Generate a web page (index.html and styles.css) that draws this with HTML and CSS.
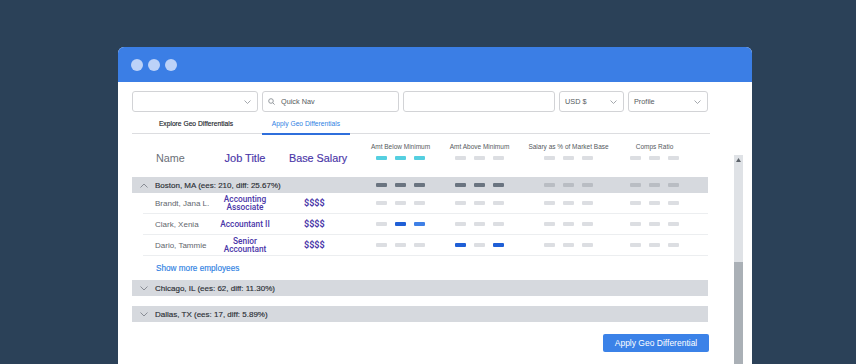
FILE: index.html
```html
<!DOCTYPE html>
<html>
<head>
<meta charset="utf-8">
<link rel="stylesheet" href="styles.css">
</head>
<body>
<div class="window">
  <div class="titlebar">
    <span class="dot"></span><span class="dot"></span><span class="dot"></span>
  </div>
  <div class="content">
    <div class="toolbar">
      <div class="field f1"><span class="grow"></span><svg class="chev" width="7" height="4" viewBox="0 0 7 4"><polyline points="0.5,0.5 3.5,3.5 6.5,0.5" /></svg></div>
      <div class="field f2"><svg class="search" width="7" height="7" viewBox="0 0 7 7"><circle cx="3" cy="3" r="2.3"/><line x1="4.7" y1="4.7" x2="6.6" y2="6.6"/></svg><span class="grow">Quick Nav</span></div>
      <div class="field f3"></div>
      <div class="field f4"><span class="grow">USD $</span><svg class="chev" width="7" height="4" viewBox="0 0 7 4"><polyline points="0.5,0.5 3.5,3.5 6.5,0.5" /></svg></div>
      <div class="field f5"><span class="grow">Profile</span><svg class="chev" width="7" height="4" viewBox="0 0 7 4"><polyline points="0.5,0.5 3.5,3.5 6.5,0.5" /></svg></div>
    </div>
    <div class="tabs">
      <div class="tab t1">Explore Geo Differentials</div>
      <div class="tab t2 active">Apply Geo Differentials</div>
    </div>
    <div class="main">
      <div class="table">
        <div class="row labels">
          <span></span><span></span><span></span><span></span>
          <div class="lab">Amt Below Minimum</div>
          <div class="lab">Amt Above Minimum</div>
          <div class="lab">Salary as % of Market Base</div>
          <div class="lab">Comps Ratio</div>
        </div>
        <div class="row head">
          <span></span>
          <div class="h-name">Name</div>
          <div class="h-job">Job Title</div>
          <div class="h-sal">Base Salary</div>
          <div class="bars"><i class="b cy"></i><i class="b cy"></i><i class="b cy"></i></div>
          <div class="bars"><i class="b"></i><i class="b"></i><i class="b"></i></div>
          <div class="bars"><i class="b"></i><i class="b"></i><i class="b"></i></div>
          <div class="bars"><i class="b"></i><i class="b"></i><i class="b"></i></div>
        </div>

        <div class="row group">
          <svg class="gchev" width="8" height="5" viewBox="0 0 8 5"><polyline points="0.5,4.5 4,1 7.5,4.5" /></svg>
          <div class="gname">Boston, MA (ees: 210, diff: 25.67%)</div>
          <div class="bars"><i class="b dk"></i><i class="b dk"></i><i class="b dk"></i></div>
          <div class="bars"><i class="b dk"></i><i class="b dk"></i><i class="b dk"></i></div>
          <div class="bars"><i class="b md"></i><i class="b md"></i><i class="b md"></i></div>
          <div class="bars"><i class="b md"></i><i class="b md"></i><i class="b md"></i></div>
        </div>

        <div class="row emp">
          <span></span>
          <div class="ename">Brandt, Jana L.</div>
          <div class="ejob">Accounting<br>Associate</div>
          <div class="esal">$$$$</div>
          <div class="bars"><i class="b"></i><i class="b"></i><i class="b"></i></div>
          <div class="bars"><i class="b"></i><i class="b"></i><i class="b"></i></div>
          <div class="bars"><i class="b"></i><i class="b"></i><i class="b"></i></div>
          <div class="bars"><i class="b"></i><i class="b"></i><i class="b"></i></div>
        </div>
        <div class="row emp">
          <span></span>
          <div class="ename">Clark, Xenia</div>
          <div class="ejob">Accountant II</div>
          <div class="esal">$$$$</div>
          <div class="bars"><i class="b"></i><i class="b bl1"></i><i class="b bl2"></i></div>
          <div class="bars"><i class="b"></i><i class="b"></i><i class="b"></i></div>
          <div class="bars"><i class="b"></i><i class="b"></i><i class="b"></i></div>
          <div class="bars"><i class="b"></i><i class="b"></i><i class="b"></i></div>
        </div>
        <div class="row emp">
          <span></span>
          <div class="ename">Dario, Tammie</div>
          <div class="ejob">Senior<br>Accountant</div>
          <div class="esal">$$$$</div>
          <div class="bars"><i class="b"></i><i class="b"></i><i class="b"></i></div>
          <div class="bars"><i class="b bl1"></i><i class="b"></i><i class="b bl1"></i></div>
          <div class="bars"><i class="b"></i><i class="b"></i><i class="b"></i></div>
          <div class="bars"><i class="b"></i><i class="b"></i><i class="b"></i></div>
        </div>

        <div class="more">Show more employees</div>

        <div class="row group">
          <svg class="gchev" width="8" height="5" viewBox="0 0 8 5"><polyline points="0.5,0.5 4,4 7.5,0.5" /></svg>
          <div class="gname">Chicago, IL (ees: 62, diff: 11.30%)</div>
        </div>
        <div class="row group">
          <svg class="gchev" width="8" height="5" viewBox="0 0 8 5"><polyline points="0.5,0.5 4,4 7.5,0.5" /></svg>
          <div class="gname">Dallas, TX (ees: 17, diff: 5.89%)</div>
        </div>

        <div class="actions">
          <button class="apply">Apply Geo Differential</button>
        </div>
      </div>
      <div class="scrollbar">
        <svg class="arrow" width="5" height="4" viewBox="0 0 5 4"><polygon points="0,4 2.5,0 5,4"/></svg>
        <div class="thumb"></div>
      </div>
    </div>
  </div>
</div>
</body>
</html>
```

FILE: styles.css
```css
html, body {
  margin: 0;
  padding: 0;
}
body {
  width: 856px;
  height: 364px;
  overflow: hidden;
  background: #2b4158;
  font-family: "Liberation Sans", Arial, sans-serif;
  padding: 47px 0 0 118px;
  box-sizing: border-box;
}
.window {
  width: 634px;
  height: 317px;
  background: #fff;
  border-radius: 6px 6px 0 0;
  overflow: hidden;
}
.titlebar {
  height: 35px;
  background: #3b7ee5;
  display: flex;
  align-items: center;
  gap: 5px;
  padding-left: 13px;
}
.dot {
  width: 12px;
  height: 12px;
  border-radius: 50%;
  background: #bcd2f8;
}
.content {
  padding: 9px 0 0 14px;
}
.toolbar {
  display: flex;
  gap: 4px;
  height: 21px;
  width: 576px;
}
.field {
  box-sizing: border-box;
  height: 21px;
  border: 1px solid #d2d3d6;
  border-radius: 3px;
  display: flex;
  align-items: center;
  padding: 0 6px 0 5px;
  font-size: 7.3px;
  color: #555a60;
}
.grow { flex: 1; }
.f1 { width: 126px; }
.f2 { width: 137px; }
.f3 { width: 152px; }
.f4 { width: 65px; }
.f5 { width: 80px; }
.chev polyline {
  fill: none;
  stroke: #9a9ea4;
  stroke-width: 0.9;
}
.search { margin-right: 6px; }
.search circle, .search line {
  fill: none;
  stroke: #8a8e94;
  stroke-width: 0.9;
}
.tabs {
  display: flex;
  gap: 2px;
  width: 578px;
  height: 22px;
  border-bottom: 1px solid #dcdde0;
  box-sizing: border-box;
}
.tab {
  font-size: 6.7px;
  color: #22262c;
  -webkit-text-stroke: 0.15px #22262c;
  display: flex;
  align-items: center;
  justify-content: center;
  box-sizing: border-box;
  height: 22px;
}
.t1 { width: 128px; }
.t2 { width: 88px; }
.tab.active {
  color: #2f7fe3;
  -webkit-text-stroke: 0;
  border-bottom: 2px solid #2f6fdc;
  margin-bottom: -1px;
  height: 23px;
  padding-top: 1px;
}
.main {
  display: flex;
}
.table {
  width: 576px;
}
.row {
  display: grid;
  grid-template-columns: 23px 58px 64px 99px 79px 89px 86px 78px;
  align-items: center;
}
.labels {
  height: 12px;
  margin-top: 6px;
}
.lab {
  width: 49px;
  display: flex;
  justify-content: center;
  white-space: nowrap;
  font-size: 6.5px;
  color: #555a60;
}
.head {
  height: 12px;
  margin-bottom: 13px;
}
.h-name {
  font-size: 10.8px;
  color: #6b7078;
  padding-left: 1px;
}
.h-job {
  font-size: 11px;
  color: #4a36a8;
  -webkit-text-stroke: 0.15px #4a36a8;
  text-align: center;
  white-space: nowrap;
}
.h-sal {
  font-size: 10.8px;
  color: #4a36a8;
  -webkit-text-stroke: 0.15px #4a36a8;
  padding-left: 12px;
  white-space: nowrap;
}
.bars {
  display: flex;
  gap: 8px;
}
.b {
  display: block;
  width: 11px;
  height: 4px;
  border-radius: 1px;
  background: #dcdee2;
}
.b.cy { background: #55cfe0; }
.b.dk { background: #6a7480; }
.b.md { background: #b9bdc3; }
.b.bl1 { background: #1f5fd6; }
.b.bl2 { background: #3f80e6; }
.group {
  height: 16px;
  background: #d6d9de;
  grid-template-columns: 23px 221px 79px 89px 86px 78px;
}
.gchev {
  justify-self: center;
}
.gchev polyline {
  fill: none;
  stroke: #80858c;
  stroke-width: 0.9;
}
.gname {
  font-size: 8px;
  color: #2a2e34;
  -webkit-text-stroke: 0.15px #2a2e34;
  white-space: nowrap;
}
.emp {
  height: 20px;
  margin-left: 11px;
  grid-template-columns: 12px 58px 64px 99px 79px 89px 86px 78px;
  border-bottom: 1px solid #eceef0;
}
.ename {
  font-size: 8px;
  color: #62666d;
  white-space: nowrap;
}
.ejob {
  font-family: Roboto, "Liberation Sans", sans-serif;
  font-weight: 500;
  font-size: 8.3px;
  color: #4a36a8;
  text-align: center;
  line-height: 8.5px;
  white-space: nowrap;
}
.esal {
  font-family: Roboto, "Liberation Sans", sans-serif;
  font-size: 9px;
  font-weight: 700;
  color: #4a36a8;
  padding-left: 27px;
}
.more {
  height: 24px;
  display: flex;
  align-items: center;
  padding-left: 24px;
  font-size: 8.2px;
  color: #2f7fe3;
  -webkit-text-stroke: 0.15px #2f7fe3;
}
.group + .group {
  margin-top: 10px;
}
.actions {
  display: flex;
  justify-content: flex-end;
  margin-top: 12px;
  margin-right: -1px;
}
.apply {
  height: 18px;
  width: 106px;
  border: none;
  border-radius: 2px;
  background: #3b82e8;
  color: #fff;
  font-family: "Liberation Sans", Arial, sans-serif;
  font-size: 8.5px;
  padding: 0;
}
.scrollbar {
  margin-left: 26px;
  margin-top: 21px;
  width: 9px;
  height: 209px;
  background: #dfe2e6;
  display: flex;
  flex-direction: column;
  align-items: center;
}
.arrow {
  margin-top: 3px;
}
.arrow polygon { fill: #5d636a; }
.thumb {
  margin-top: auto;
  width: 9px;
  height: 102px;
  background: #aab0b6;
}
```
